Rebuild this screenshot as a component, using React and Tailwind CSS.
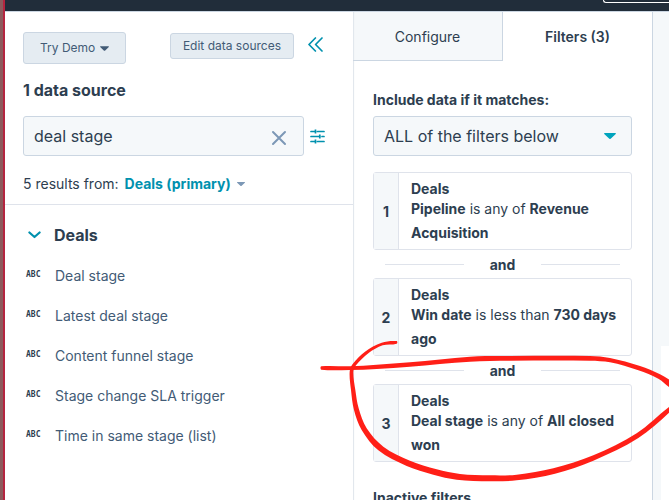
import React from "react";

const results = [
  "Deal stage",
  "Latest deal stage",
  "Content funnel stage",
  "Stage change SLA trigger",
  "Time in same stage (list)",
];

const filters = [
  { field: "Pipeline", operator: "is any of", value: "Revenue Acquisition" },
  { field: "Win date", operator: "is less than", value: "730 days ago" },
  { field: "Deal stage", operator: "is any of", value: "All closed won" },
];

function Caret({ className }) {
  return (
    <svg viewBox="0 0 10 5" className={className} aria-hidden="true">
      <path d="M0.6 0h8.8c.5 0 .7.5.4.8L5.8 4.6a1.1 1.1 0 0 1-1.6 0L.2.8C-.1.5.1 0 .6 0z" fill="currentColor" />
    </svg>
  );
}

function SourcePanel() {
  return (
    <section className="min-w-0 flex-1 bg-white pt-5">
      <div className="flex items-start pr-[30px] pl-[18px]">
        <button className="flex h-8 items-center gap-[5px] rounded-[3px] border border-[#cbd6e2] bg-[#e5ecf2] px-4 text-[12px] text-[#425b76]">
          Try Demo
          <Caret className="h-[5px] w-[9px]" />
        </button>
        <button className="mt-px ml-auto h-[26px] rounded-[3px] border border-[#cbd6e2] bg-[#e5ecf2] px-3 text-[12px] text-[#425b76]">
          Edit data sources
        </button>
        <button aria-label="Collapse panel" className="mt-[5px] ml-[14px] text-[#0091ae]">
          <svg viewBox="0 0 15 15" className="h-[15px] w-[15px]" fill="none" stroke="currentColor" strokeWidth="1.7" strokeLinecap="round" strokeLinejoin="round">
            <path d="M7.4 1 1 7.5 7.4 14M14 1 7.6 7.5 14 14" />
          </svg>
        </button>
      </div>

      <h2 className="mt-[14px] pl-[18px] text-[16px] leading-6 font-bold">1 data source</h2>

      <div className="mt-[14px] flex items-center gap-[6px] pr-7 pl-[18px]">
        <div className="flex h-10 min-w-0 flex-1 items-center rounded-[3px] border border-[#cbd6e2] bg-[#f5f8fa] pr-4 pl-[10px]">
          <input aria-label="Search properties" defaultValue="deal stage" className="min-w-0 flex-1 bg-transparent text-[16px] outline-none" />
          <button aria-label="Clear search" className="mt-1 text-[#7c98b6]">
            <svg viewBox="0 0 16 16" className="h-4 w-4" fill="none" stroke="currentColor" strokeWidth="2" strokeLinecap="round">
              <path d="M2 2 14 14M14 2 2 14" />
            </svg>
          </button>
        </div>
        <button aria-label="Search settings" className="text-[#0091ae]">
          <svg viewBox="0 0 15 15" className="h-[15px] w-[15px]" fill="none" stroke="currentColor" strokeWidth="1.7">
            <path d="M1 2.5h4.5M7.5 2.5H14M1 7.5h8.5M12 7.5h2M1 12.5h4.5M7.5 12.5H14" strokeLinecap="round" />
            <path d="M5.5 .5v4M9.8 5.5v4M5.5 10.5v4" />
          </svg>
        </button>
      </div>

      <div className="mt-4 flex items-center border-b border-[#dfe3eb] pb-2 pl-[18px] text-[14px] leading-6">
        <span>5 results from:</span>
        <button className="ml-[6px] flex items-center gap-[6px] font-bold text-[#0091ae]">
          Deals (primary)
          <Caret className="h-1 w-2 text-[#7c98b6]" />
        </button>
      </div>

      <button className="mt-[18px] ml-[23px] flex items-center gap-[13px] text-[16px] leading-6 font-bold">
        <svg viewBox="0 0 13 8" className="h-2 w-[13px] text-[#0091ae]" fill="none" stroke="currentColor" strokeWidth="2.2" strokeLinecap="round" strokeLinejoin="round">
          <path d="M1.4 1.5 6.5 6l5.1-4.5" />
        </svg>
        Deals
      </button>

      <ul className="mt-2 pl-[21px]">
        {results.map((name) => (
          <li key={name} className="flex h-10 items-center gap-[14px]">
            <span className="w-[15px] font-['DejaVu_Sans_Mono',monospace] text-[8px] leading-3 font-bold">ABC</span>
            <span className="text-[14px] text-[#425b76]">{name}</span>
          </li>
        ))}
      </ul>
    </section>
  );
}

function FilterPanel() {
  return (
    <section className="w-[300px] shrink-0 border-r border-[#cbd6e2] bg-white shadow-[inset_2px_0_1px_-1px_#dfe5ec]">
      <div role="tablist" className="flex h-[49px] text-[14px]">
        <button role="tab" aria-selected="false" className="w-[150px] border-r border-b border-[#cbd6e2] bg-[#f5f8fa] shadow-[inset_2px_0_1px_-1px_#dfe5ec]">
          Configure
        </button>
        <button role="tab" aria-selected="true" className="flex-1 font-semibold">
          Filters (3)
        </button>
      </div>

      <div className="px-5 pt-[27px]">
        <label htmlFor="match" className="block text-[14px] leading-6 font-bold">
          Include data if it matches:
        </label>
        <div className="relative mt-1">
          <select id="match" className="h-10 w-full appearance-none rounded-[3px] border border-[#cbd6e2] bg-[#f5f8fa] px-[10px] text-[16px]">
            <option>ALL of the filters below</option>
          </select>
          <Caret className="pointer-events-none absolute top-[17px] right-4 h-[6px] w-3 text-[#00a4bd]" />
        </div>

        <div className="mt-4">
          {filters.map((filter, index) => (
            <React.Fragment key={filter.field}>
              {index > 0 && (
                <div className="flex h-7 items-center px-3 text-[14px] font-bold">
                  <span className="h-px flex-1 bg-[#dfe3eb]" />
                  <span className="w-[77px] text-center">and</span>
                  <span className="h-px flex-1 bg-[#dfe3eb]" />
                </div>
              )}
              <div className="flex rounded-[3px] border border-[#dfe3eb] text-[14px]">
                <div className="flex w-[25px] shrink-0 items-center justify-center border-r border-[#dfe3eb] bg-[#f5f8fa] font-bold">
                  {index + 1}
                </div>
                <div className="pt-2 pr-2 pb-1 pl-3">
                  <p className="leading-4 font-bold">Deals</p>
                  <p className="leading-6">
                    <b>{filter.field}</b> {filter.operator} <b>{filter.value}</b>
                  </p>
                </div>
              </div>
            </React.Fragment>
          ))}
        </div>

        <h3 className="mt-6 text-[14px] leading-6 font-bold">Inactive filters</h3>
      </div>
    </section>
  );
}

// Outlines of the marker strokes, whose width varies along the line.
const loopOutline = [
  [260, 33], [215, 38], [165, 65], [128, 102], [119, 125], [123, 180], [132, 240], [155, 300], [205, 361],
  [290, 408], [370, 434], [440, 449], [540, 454], [620, 451], [735, 431], [850, 392], [985, 324], [1090, 236],
  [1090, 222], [980, 310], [850, 376], [730, 415], [620, 434], [540, 436], [450, 432], [380, 418], [300, 392],
  [220, 350], [170, 295], [146, 235], [136, 180], [130, 125], [138, 106], [175, 70], [218, 46], [260, 41],
];
const topOutline = [
  [34, 109], [120, 109], [200, 104], [300, 97], [480, 80], [600, 78], [840, 78], [900, 84], [990, 108],
  [1050, 133], [1090, 160], [1090, 178], [1045, 146], [985, 121], [900, 97], [840, 92], [600, 92], [480, 95],
  [300, 110], [200, 117], [120, 120], [34, 119],
];

function smoothPath(points) {
  const at = (i) => points[(i + points.length) % points.length];
  let d = `M${points[0][0]} ${points[0][1]}`;
  points.forEach((p, i) => {
    const [before, next, after] = [at(i - 1), at(i + 1), at(i + 2)];
    const length = Math.hypot(next[0] - p[0], next[1] - p[1]);
    const tangent = (a, b) => {
      const size = Math.hypot(b[0] - a[0], b[1] - a[1]) || 1;
      return [((b[0] - a[0]) / size) * (length / 3), ((b[1] - a[1]) / size) * (length / 3)];
    };
    const t1 = tangent(before, next);
    const t2 = tangent(p, after);
    d += `C${p[0] + t1[0]} ${p[1] + t1[1]} ${next[0] - t2[0]} ${next[1] - t2[1]} ${next[0]} ${next[1]}`;
  });
  return d + "Z";
}

function Annotation() {
  return (
    <svg viewBox="0 0 1077 510" className="pointer-events-none absolute top-[330px] right-0 h-[170px] w-[359px]" fill="#ff1f17" aria-hidden="true">
      <path d={smoothPath(loopOutline)} />
      <path d={smoothPath(topOutline)} />
    </svg>
  );
}

export default function App() {
  return (
    <div className="relative flex h-screen overflow-hidden bg-[#f5f8fa] font-[Inter,'Noto_Sans',sans-serif] text-[#2d3e50]">
      <div className="w-[5px] shrink-0 border-r-2 border-[#b5243f] bg-[#8d5a5c]" />
      <div className="flex min-w-0 flex-1 flex-col">
        <header className="flex h-3 shrink-0 justify-end border-b border-[#cbd6e2] bg-[#212d3a]">
          <div className="h-[3px] w-[66px] rounded-bl-[3px] border-b border-l border-white" />
        </header>
        <main className="flex min-h-0 flex-1">
          <SourcePanel />
          <FilterPanel />
          <aside className="w-4 shrink-0 pt-[334px] pl-2">
            <div className="h-full bg-white" />
          </aside>
        </main>
      </div>
      <Annotation />
    </div>
  );
}
